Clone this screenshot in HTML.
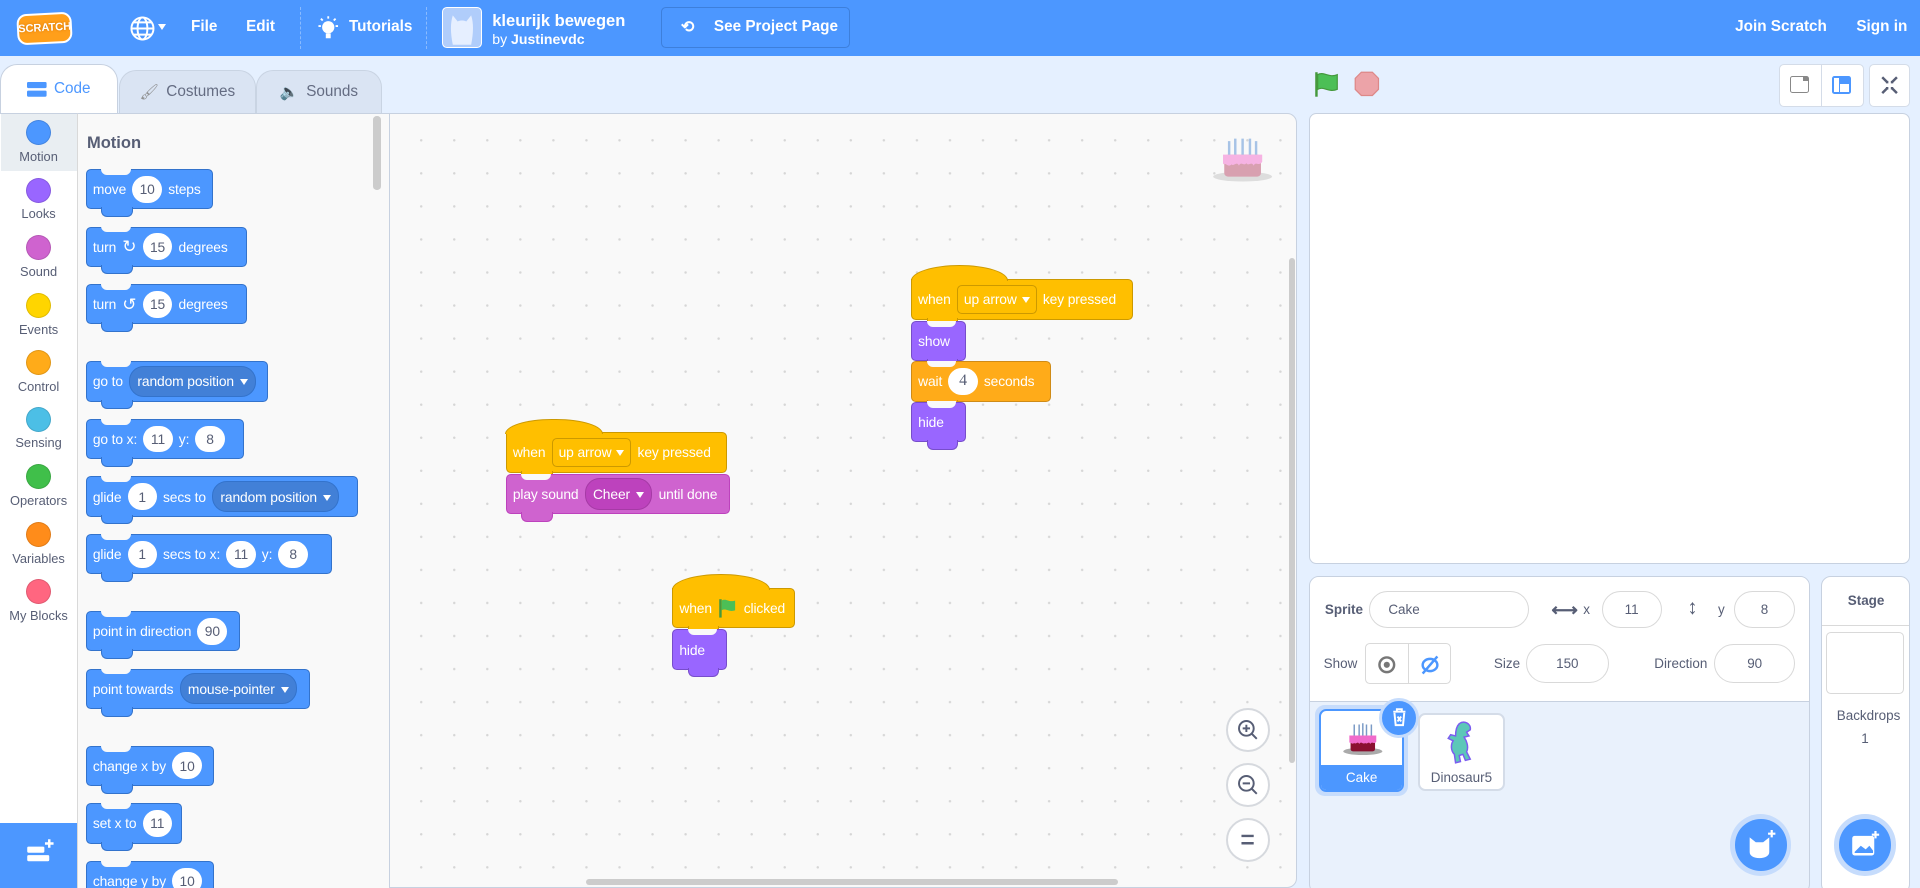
<!DOCTYPE html>
<html><head><meta charset="utf-8"><style>
html,body{margin:0;padding:0;overflow:hidden;width:1920px;height:888px;background:#e5f0ff}
#w{zoom:1.2244898;width:1568px;height:725px;position:relative;font-family:"Liberation Sans",sans-serif;overflow:hidden}
.a{position:absolute}
.hd{left:0;top:0;width:1568px;height:46px;background:#4c97ff;color:#fff;font-weight:bold;font-size:12.5px}
.tab{position:absolute;top:57px;height:36px;background:#d9e3f2;border:1px solid #c7d1e0;border-bottom:none;border-radius:14px 14px 0 0;color:#575e75;opacity:.9;font-size:12.5px;display:flex;align-items:center;justify-content:center;gap:6px;box-sizing:border-box}
.cat{position:absolute;left:0;width:63px;text-align:center;font-size:10.5px;color:#575e75}
.cat i{display:block;width:19px;height:19px;border-radius:50%;margin:0 auto 3px;border:1px solid rgba(0,0,0,.12)}
.b{position:absolute;height:33px;border-radius:4px;color:#fff;font-size:11.3px;display:flex;align-items:center;padding:0 5px;gap:5px;box-sizing:border-box;white-space:nowrap;background:#4c97ff;border:1px solid #3373cc;letter-spacing:-0.1px}
.b::after{content:"";position:absolute;left:12px;bottom:-7px;width:24px;height:7px;background:inherit;border:1px solid;border-color:inherit;border-top:none;border-radius:0 0 5px 5px}
.b::before{content:"";position:absolute;left:12px;top:-1px;width:24px;height:5px;background:#f9f9f9;border-radius:0 0 5px 5px}
.b.nt::before{display:none}
.b.hat{border-top-left-radius:0}
.b.hat::before{display:block;left:-1px;top:-12px;width:78px;height:12px;background:inherit;border-radius:50% 50% 0 0/100% 100% 0 0;border:1px solid;border-color:inherit;border-bottom:none}
.n{background:#fff;color:#575e75;border-radius:12px;height:22px;min-width:12px;padding:0 6px;display:flex;align-items:center;justify-content:center}
.d{background:#4280d7;border-radius:12px;height:24px;padding:0 6px;display:flex;align-items:center;gap:5px;border:1px solid #3373cc}
.d::after,.dd::after{content:"";border:4px solid transparent;border-top:5px solid #fff;margin-top:5px}
.dd{border:1px solid #cc9900;border-radius:4px;height:22px;padding:0 5px;display:flex;align-items:center;gap:4px;background:#ffbf00}
.ev{background:#ffbf00;border-color:#cc9900}
.lk{background:#9966ff;border-color:#774dcb}
.ct{background:#ffab19;border-color:#cf8b17}
.sd{background:#cf63cf;border-color:#bd42bd}
.in{position:absolute;background:#fff;border:1px solid #d9d9d9;border-radius:16px;height:30px;box-sizing:border-box;display:flex;align-items:center;justify-content:center;font-size:11px;color:#575e75}
.lb{position:absolute;font-size:11px;color:#575e75}
.zb{position:absolute;left:1001px;width:36px;height:36px;border-radius:50%;background:#fff;border:2px solid #d6d9de;box-sizing:border-box}
</style></head><body><div id="w">
<div class="a hd">
 <div class="a" style="left:14px;top:11px;width:42px;height:22px;background:#ff9f1a;border:2px solid #fff;border-radius:8px;transform:rotate(-3deg);font-size:9px;color:#fff;display:flex;align-items:center;justify-content:center;text-shadow:0 0 2px #d07000;overflow:hidden">SCRATCH</div>
 <svg class="a" style="left:105px;top:12px" width="22" height="22" viewBox="0 0 22 22" fill="none" stroke="#fff" stroke-width="1.6"><circle cx="11" cy="11" r="9"/><ellipse cx="11" cy="11" rx="4" ry="9"/><path d="M2 11h18M4 6h14M4 16h14"/></svg>
 <div class="a" style="left:129px;top:20px;border:4px solid transparent;border-top:5px solid #fff"></div>
 <div class="a" style="left:156px;top:15px">File</div>
 <div class="a" style="left:201px;top:15px">Edit</div>
 <div class="a" style="left:245px;top:6px;height:34px;border-left:1px dashed rgba(255,255,255,.35)"></div>
 <svg class="a" style="left:258px;top:12px" width="20" height="22" viewBox="0 0 20 22" fill="#fff"><circle cx="10" cy="10" r="5"/><rect x="8" y="15" width="4" height="4"/><path d="M10 1v2M2 9h2M16 9h2M4 3l1.5 1.5M16 3l-1.5 1.5" stroke="#fff" stroke-width="1.5"/></svg>
 <div class="a" style="left:285px;top:15px">Tutorials</div>
 <div class="a" style="left:348px;top:6px;height:34px;border-left:1px dashed rgba(255,255,255,.35)"></div>
 <div class="a" style="left:361px;top:6px;width:33px;height:33px;border-radius:4px;background:#b0cdfb;border:1px solid #fff;box-sizing:border-box"><svg width="31" height="31" viewBox="0 0 31 31"><path d="M8 30 C6 20 6 12 8 6 L12 11 C14 10 17 10 19 11 L23 6 C25 12 25 20 23 30Z" fill="#e6efff"/></svg></div>
 <div class="a" style="left:402px;top:9px;font-size:13.5px">kleurijk bewegen</div>
 <div class="a" style="left:402px;top:25px;font-size:11.5px"><span style="font-weight:normal">by</span> Justinevdc</div>
 <div class="a" style="left:540px;top:6px;width:154px;height:33px;border:1px solid #3d7fdb;border-radius:4px;background:#4c97ff;box-sizing:border-box"></div>
 <div class="a" style="left:556px;top:14px;font-size:13px">⟲</div>
 <div class="a" style="left:583px;top:15px">See Project Page</div>
 <div class="a" style="left:1417px;top:15px">Join Scratch</div>
 <div class="a" style="left:1516px;top:15px">Sign in</div>
</div>
<div class="tab" style="left:97px;width:112px;top:57px"><span style="color:#888">🖌</span>Costumes</div>
<div class="tab" style="left:209px;width:103px"><span style="color:#888">🔈</span>Sounds</div>
<div class="tab" style="left:0;top:52px;height:41px;width:96px;background:#fff;color:#4c97ff;opacity:1"><svg width="16" height="12"><rect x="0" y="0" width="16" height="5" rx="1" fill="#4c97ff"/><rect x="0" y="7" width="16" height="5" rx="1" fill="#4c97ff"/></svg>Code</div>
<div class="a" style="left:0;top:92px;width:63px;height:633px;background:#fff;border-right:1px solid #d9d9d9;border-top:1px solid #c7d1e0"></div>
<div class="a" style="left:1px;top:93px;width:62px;height:47px;background:#e9eef2"></div>
<div class="cat" style="top:98px"><i style="background:#4c97ff"></i>Motion</div>
<div class="cat" style="top:145px"><i style="background:#9966ff"></i>Looks</div>
<div class="cat" style="top:192px"><i style="background:#cf63cf"></i>Sound</div>
<div class="cat" style="top:239px"><i style="background:#ffd500"></i>Events</div>
<div class="cat" style="top:286px"><i style="background:#ffab19"></i>Control</div>
<div class="cat" style="top:332px"><i style="background:#4cbfe6"></i>Sensing</div>
<div class="cat" style="top:379px"><i style="background:#40bf4a"></i>Operators</div>
<div class="cat" style="top:426px"><i style="background:#ff8c1a"></i>Variables</div>
<div class="cat" style="top:473px"><i style="background:#ff6680"></i>My Blocks</div>
<div class="a" style="left:0;top:672px;width:63px;height:53px;background:#4c97ff"><svg style="margin:12px 0 0 21px" width="24" height="22" viewBox="0 0 24 22" fill="#fff"><rect x="1" y="7" width="14" height="5" rx="1"/><rect x="1" y="14" width="18" height="5" rx="1"/><path d="M19 1v7M15.5 4.5h7" stroke="#fff" stroke-width="2"/></svg></div>
<div class="a" style="left:64px;top:92px;width:254px;height:633px;background:#f9f9f9;border-top:1px solid #c7d1e0"></div>
<div class="a" style="left:305px;top:95px;width:6px;height:60px;border-radius:3px;background:#ccc"></div>
<div class="a" style="left:71px;top:109px;font-size:13.5px;font-weight:bold;color:#575e75">Motion</div>
<div class="b" style="left:70px;top:138px;width:104px">move <span class="n">10</span> steps</div>
<div class="b" style="left:70px;top:185px;width:132px">turn <span style="font-size:14px">↻</span><span class="n">15</span> degrees</div>
<div class="b" style="left:70px;top:232px;width:132px">turn <span style="font-size:14px">↺</span><span class="n">15</span> degrees</div>
<div class="b" style="left:70px;top:295px;width:149px">go to <span class="d">random position</span></div>
<div class="b" style="left:70px;top:342px;width:129px">go to x: <span class="n">11</span> y: <span class="n">8</span></div>
<div class="b" style="left:70px;top:389px;width:222px">glide <span class="n">1</span> secs to <span class="d">random position</span></div>
<div class="b" style="left:70px;top:436px;width:201px">glide <span class="n">1</span> secs to x: <span class="n">11</span> y: <span class="n">8</span></div>
<div class="b" style="left:70px;top:499px;width:126px">point in direction <span class="n">90</span></div>
<div class="b" style="left:70px;top:546px;width:183px">point towards <span class="d">mouse-pointer</span></div>
<div class="b" style="left:70px;top:609px;width:105px">change x by <span class="n">10</span></div>
<div class="b" style="left:70px;top:656px;width:79px">set x to <span class="n">11</span></div>
<div class="b" style="left:70px;top:703px;width:105px">change y by <span class="n">10</span></div>
<div class="a" style="left:318px;top:92px;width:741px;height:633px;background-color:#f9f9f9;background-image:radial-gradient(circle,#d6d6d6 0.8px,transparent 1.2px);background-size:27px 27px;background-position:12px 8px;border:1px solid #c7d1e0;border-radius:0 8px 8px 0;box-sizing:border-box;overflow:hidden">
 <div class="a" style="left:734px;top:118px;width:5px;height:412px;border-radius:3px;background:#ccc"></div>
 <div class="a" style="left:160px;top:625px;width:434px;height:5px;border-radius:3px;background:#ccc"></div>
</div>
<svg class="a" style="left:990px;top:110px" width="50" height="40" viewBox="0 0 50 40"><ellipse cx="25" cy="34" rx="24" ry="4" fill="#ddd"/><rect x="10" y="16" width="30" height="18" rx="3" fill="#d8a0b0"/><path d="M9 16h32v6c-3 4-5-1-7 3-2-4-4 1-6-2-2 3-4-2-6 2-2-4-4 1-6-1-3 3-5-2-7 0z" fill="#f6b3e3"/><g stroke="#a7c3e6" stroke-width="2"><path d="M14 5v11M19 3v13M25 3v13M31 3v13M36 5v11"/></g></svg>
<div class="b ev hat" style="left:744px;top:228px;width:181px">when <span class="dd">up arrow</span> key pressed</div>
<div class="b lk" style="left:744px;top:262px;width:45px">show</div>
<div class="b ct" style="left:744px;top:295px;width:114px">wait <span class="n" style="font-family:'Liberation Serif',serif;font-size:13px">4</span> seconds</div>
<div class="b lk" style="left:744px;top:328px;width:45px">hide</div>
<div class="b ev hat" style="left:413px;top:353px;width:181px">when <span class="dd">up arrow</span> key pressed</div>
<div class="b sd" style="left:413px;top:387px;width:183px">play sound <span class="d" style="background:#bd42bd;border-color:#a63aa6">Cheer</span> until done</div>
<div class="b ev hat" style="left:549px;top:480px;width:100px">when <svg width="16" height="16" viewBox="0 0 16 16"><path d="M2 1v15" stroke="#45993d" stroke-width="2"/><path d="M3 2c4-2 6 2 11 0v8c-5 2-7-2-11 0z" fill="#4cbf56"/></svg> clicked</div>
<div class="b lk" style="left:549px;top:514px;width:45px">hide</div>
<div class="zb" style="top:578px"><svg width="32" height="32" viewBox="0 0 32 32" fill="none" stroke="#575e75" stroke-width="1.6"><circle cx="15" cy="15" r="6"/><path d="M19.5 19.5l4 4M15 12v6M12 15h6"/></svg></div>
<div class="zb" style="top:623px"><svg width="32" height="32" viewBox="0 0 32 32" fill="none" stroke="#575e75" stroke-width="1.6"><circle cx="15" cy="15" r="6"/><path d="M19.5 19.5l4 4M12 15h6"/></svg></div>
<div class="zb" style="top:668px"><svg width="32" height="32" viewBox="0 0 32 32" stroke="#575e75" stroke-width="2"><path d="M11 13h10M11 19h10"/></svg></div>
<svg class="a" style="left:1073px;top:58px" width="22" height="22" viewBox="0 0 22 22"><path d="M2 1v20" stroke="#45993d" stroke-width="2"/><path d="M3 3c5-3 9 3 16 0v12c-7 3-11-3-16 0z" fill="#4cbf56" stroke="#45993d"/></svg>
<svg class="a" style="left:1106px;top:58px" width="21" height="21" viewBox="0 0 21 21"><polygon points="6,1 15,1 20,6 20,15 15,20 6,20 1,15 1,6" fill="#eca3a8" stroke="#d88"/></svg>
<div class="a" style="left:1453px;top:52px;width:69px;height:35px;background:#fff;border:1px solid #d4dce8;border-radius:4px;box-sizing:border-box"></div>
<div class="a" style="left:1487px;top:52px;height:35px;border-left:1px solid #d4dce8"></div>
<div class="a" style="left:1462px;top:62px;width:15px;height:14px;border:1.5px solid #888;border-radius:2px;box-sizing:border-box"><div style="position:absolute;right:0;top:0;width:4px;height:3px;background:#888"></div></div>
<div class="a" style="left:1496px;top:62px;width:16px;height:15px;background:#4c97ff;border-radius:2px"><div style="position:absolute;left:7px;top:7px;width:7px;height:6px;background:#fff"></div><div style="position:absolute;left:2px;top:2px;width:4px;height:11px;background:#fff"></div></div>
<div class="a" style="left:1526px;top:52px;width:34px;height:35px;background:#fff;border:1px solid #d4dce8;border-radius:4px;box-sizing:border-box"><svg width="32" height="33" viewBox="0 0 32 33" fill="none" stroke="#575e75" stroke-width="2"><path d="M10 10l4 4M22 10l-4 4M10 23l4-4M22 23l-4-4M13 14h1v-1M19 14h-1v-1M13 19h1v1M19 19h-1v1"/></svg></div>
<div class="a" style="left:1069px;top:92px;width:491px;height:369px;background:#fff;border:1px solid #c7d1e0;border-radius:6px;box-sizing:border-box"></div>
<div class="a" style="left:1069px;top:470px;width:409px;height:260px;background:#e9f1fc;border:1px solid #c7d1e0;border-radius:8px;box-sizing:border-box;overflow:hidden"><div style="height:102px;background:#fff;border-bottom:1px solid #c7d1e0"></div></div>
<div class="lb" style="left:1082px;top:492px;font-weight:bold">Sprite</div>
<div class="in" style="left:1118px;top:483px;width:131px;justify-content:flex-start;padding-left:15px">Cake</div>
<div class="lb" style="left:1267px;top:489px;font-size:15px;font-weight:bold">⟷</div>
<div class="lb" style="left:1293px;top:492px">x</div>
<div class="in" style="left:1308px;top:483px;width:49px">11</div>
<div class="lb" style="left:1378px;top:487px;font-size:17px;font-weight:bold">↕</div>
<div class="lb" style="left:1403px;top:492px">y</div>
<div class="in" style="left:1416px;top:483px;width:50px">8</div>
<div class="lb" style="left:1081px;top:536px">Show</div>
<div class="a" style="left:1115px;top:525px;width:70px;height:34px;border:1px solid #d9d9d9;border-radius:4px;box-sizing:border-box;background:#fff"><div style="position:absolute;left:34px;top:0;height:32px;border-left:1px solid #d9d9d9"></div>
<svg class="a" style="left:9px;top:9px" width="16" height="16" viewBox="0 0 16 16"><circle cx="8" cy="8" r="6" fill="none" stroke="#777" stroke-width="2"/><circle cx="8" cy="8" r="2.5" fill="#777"/></svg>
<svg class="a" style="left:43px;top:8px" width="18" height="18" viewBox="0 0 18 18" fill="none" stroke="#4c97ff" stroke-width="2"><ellipse cx="9" cy="9" rx="6" ry="5"/><path d="M15 2L3 16"/></svg></div>
<div class="lb" style="left:1220px;top:536px">Size</div>
<div class="in" style="left:1246px;top:526px;width:68px;height:32px">150</div>
<div class="lb" style="left:1351px;top:536px">Direction</div>
<div class="in" style="left:1400px;top:526px;width:66px;height:32px">90</div>
<div class="a" style="left:1074px;top:576px;width:76px;height:74px;border-radius:8px;background:#c6dcfc"></div>
<div class="a" style="left:1077px;top:579px;width:70px;height:68px;border-radius:6px;background:#fff;border:2px solid #4c97ff;box-sizing:border-box;overflow:hidden"><div style="position:absolute;bottom:0;left:0;right:0;height:21px;background:#4c97ff;color:#fff;font-size:11px;text-align:center;line-height:21px">Cake</div>
<svg class="a" style="left:17px;top:9px" width="34" height="28" viewBox="0 0 34 28"><ellipse cx="17" cy="24" rx="16" ry="3" fill="#aaa"/><rect x="7" y="11" width="20" height="13" rx="2" fill="#8a1030"/><path d="M6 11h22v5c-2 3-3-1-5 2-1-3-3 1-4-1-2 2-3-2-5 1-1-3-3 1-4-1-2 2-3-1-4 0z" fill="#f06acb"/><g stroke="#7a9ac6" stroke-width="1.2"><path d="M10 2v9M14 2v9M17 1v10M20 2v9M24 2v9"/></g></svg></div>
<div class="a" style="left:1129px;top:573px;width:28px;height:28px;border-radius:50%;background:#4c97ff;border:3px solid #c6dcfc;box-sizing:content-box;margin:-3px"><svg style="margin:6px 0 0 8px" width="12" height="15" viewBox="0 0 12 15" fill="none" stroke="#fff" stroke-width="1.6"><path d="M1 3h10M4 3V1h4v2M2 4l1 10h6l1-10M4.5 7l3 4M7.5 7l-3 4"/></svg></div>
<div class="a" style="left:1158px;top:582px;width:71px;height:64px;border-radius:6px;background:#fff;border:2px solid #d4dce8;box-sizing:border-box"><div style="position:absolute;bottom:3px;left:0;right:0;color:#575e75;font-size:11px;text-align:center">Dinosaur5</div>
<svg class="a" style="left:22px;top:4px" width="26" height="36" viewBox="0 0 26 36"><path d="M10 3c4-3 10 0 9 5l-3 2 2 3-4 1c2 3 4 8 2 12l3 6-4 1-2-5-3 1 1 5-4 1-1-7c-3-3-3-8-1-11l-4-2 2-3 4 1c0-4 1-8 3-10z" fill="#5cc7b8" stroke="#7b5cf0" stroke-width="1.2"/></svg></div>
<div class="a" style="left:1413px;top:665px;width:50px;height:50px;border-radius:50%;background:#c6dcfc"></div>
<div class="a" style="left:1417px;top:669px;width:42px;height:42px;border-radius:50%;background:#4c97ff"><svg style="margin:9px 0 0 9px" width="26" height="24" viewBox="0 0 26 24" fill="#fff"><path d="M3 6l5 4h6l5-4v12c0 3-3 5-8 5s-8-2-8-5z"/><path d="M21 0v6M18 3h6" stroke="#fff" stroke-width="1.8"/></svg></div>
<div class="a" style="left:1487px;top:470px;width:73px;height:260px;background:#fff;border:1px solid #c7d1e0;border-radius:8px;box-sizing:border-box"><div style="position:absolute;left:0;right:0;top:40px;border-top:1px solid #d9d9d9"></div></div>
<div class="lb" style="left:1509px;top:484px;font-weight:bold;font-size:11px">Stage</div>
<div class="a" style="left:1491px;top:516px;width:64px;height:51px;border:1px solid #d9d9d9;border-radius:4px;box-sizing:border-box;background:#fff"></div>
<div class="lb" style="left:1500px;top:578px;font-size:11px">Backdrops</div>
<div class="lb" style="left:1520px;top:597px;font-size:11px">1</div>
<div class="a" style="left:1498px;top:665px;width:50px;height:50px;border-radius:50%;background:#c6dcfc"></div>
<div class="a" style="left:1502px;top:669px;width:42px;height:42px;border-radius:50%;background:#4c97ff"><svg style="margin:10px 0 0 10px" width="24" height="22" viewBox="0 0 24 22"><rect x="1" y="4" width="18" height="16" rx="2" fill="#fff"/><path d="M3 17l5-5 4 3 3-3 3 4v2H3z" fill="#4c97ff"/><path d="M20 0v6M17 3h6" stroke="#fff" stroke-width="1.8"/></svg></div>
</div></body></html>
